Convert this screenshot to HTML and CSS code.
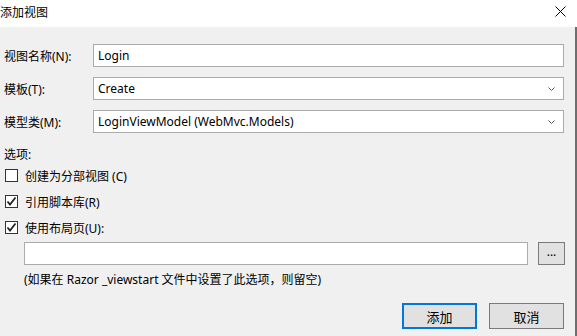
FILE: index.html
```html
<!DOCTYPE html>
<html lang="zh-CN">
<head>
  <meta charset="UTF-8" />
  <title>添加视图</title>
  <link rel="stylesheet" href="styles.css">
</head>
<body>

  <div class="titlebar">
    <span class="title">添加视图</span>
    <svg class="close" width="11" height="11" viewBox="0 0 11 11">
      <path d="M0.5 0.5 L10.5 10.5 M10.5 0.5 L0.5 10.5" stroke="#000" stroke-width="1" fill="none"/>
    </svg>
  </div>

  <div class="panel">
    <div class="fields">
      <label>视图名称(N):</label>
      <div class="box">Login</div>

      <label>模板(T):</label>
      <div class="box select">Create
        <svg class="chev" width="7" height="4" viewBox="0 0 7 4"><path d="M0.5 0.5 L3.5 3.5 L6.5 0.5" stroke="#555" fill="none"/></svg>
      </div>

      <label>模型类(M):</label>
      <div class="box select">LoginViewModel (WebMvc.Models)
        <svg class="chev" width="7" height="4" viewBox="0 0 7 4"><path d="M0.5 0.5 L3.5 3.5 L6.5 0.5" stroke="#555" fill="none"/></svg>
      </div>
    </div>

    <div class="section">选项:</div>

    <div class="check">
      <span class="cb"></span>
      <span>创建为分部视图 (C)</span>
    </div>
    <div class="check">
      <span class="cb"><svg width="11" height="11" viewBox="0 0 11 11"><path d="M1.5 5.5 L4 8.5 L9.5 1.5" stroke="#222" stroke-width="1.8" fill="none"/></svg></span>
      <span>引用脚本库(R)</span>
    </div>
    <div class="check">
      <span class="cb"><svg width="11" height="11" viewBox="0 0 11 11"><path d="M1.5 5.5 L4 8.5 L9.5 1.5" stroke="#222" stroke-width="1.8" fill="none"/></svg></span>
      <span>使用布局页(U):</span>
    </div>

    <div class="layout-row">
      <div class="box wide"></div>
      <button class="browse">...</button>
    </div>
    <div class="hint">(如果在 Razor _viewstart 文件中设置了此选项，则留空)</div>

    <div class="actions">
      <button class="btn primary">添加</button>
      <button class="btn">取消</button>
    </div>
  </div>

</body>
</html>
```

FILE: styles.css
```css
body {
  margin: 0;
  font-family: "Noto Sans", "Noto Sans CJK SC", sans-serif;
  font-size: 12px;
  color: #000;
  background: #f0f0f0;
}

.titlebar {
  height: 27px;
  background: #fff;
  display: flex;
  align-items: center;
  justify-content: space-between;
}

.title {
  margin-top: -4px;
}

.close {
  margin-right: 11px;
  margin-top: -5px;
}

.panel {
  height: 309px;
  border-right: 2px solid #6e6e6e;
  box-sizing: border-box;
  padding-top: 17px;
}

.fields {
  display: grid;
  grid-template-columns: 89px 471px;
  row-gap: 10px;
  padding-left: 4px;
  align-items: center;
}

.box {
  height: 23px;
  box-sizing: border-box;
  border: 1px solid #ababab;
  background: #fff;
  padding: 0 4px;
  display: flex;
  align-items: center;
  line-height: 1;
}

.select {
  justify-content: space-between;
}

.chev {
  margin-right: 4px;
}

.section {
  margin: 12px 0 0 4px;
  height: 18px;
}

.check {
  display: flex;
  align-items: center;
  height: 13px;
  margin-top: 6px;
  padding-left: 5px;
}

.check + .check {
  margin-top: 13px;
}

.cb {
  width: 13px;
  height: 13px;
  box-sizing: border-box;
  border: 1px solid #333;
  background: #fff;
  margin-right: 7px;
  display: flex;
  align-items: center;
  justify-content: center;
}

.layout-row {
  display: flex;
  margin: 8px 0 0 24px;
  gap: 10px;
}

.wide {
  width: 504px;
}

.browse {
  width: 27px;
  height: 23px;
  border: 1px solid #7a7a7a;
  background: #e1e1e1;
  font: inherit;
  padding: 0 0 4px;
  line-height: 1;
}

.hint {
  margin: 5px 0 0 24px;
}

.actions {
  display: flex;
  justify-content: flex-end;
  gap: 12px;
  margin-top: 15px;
  padding-right: 11px;
}

.btn {
  width: 75px;
  height: 26px;
  border: 1px solid #7a7a7a;
  background: #e1e1e1;
  font: inherit;
  font-size: 13px;
}

.primary {
  border: 2px solid #0078d7;
}
```
